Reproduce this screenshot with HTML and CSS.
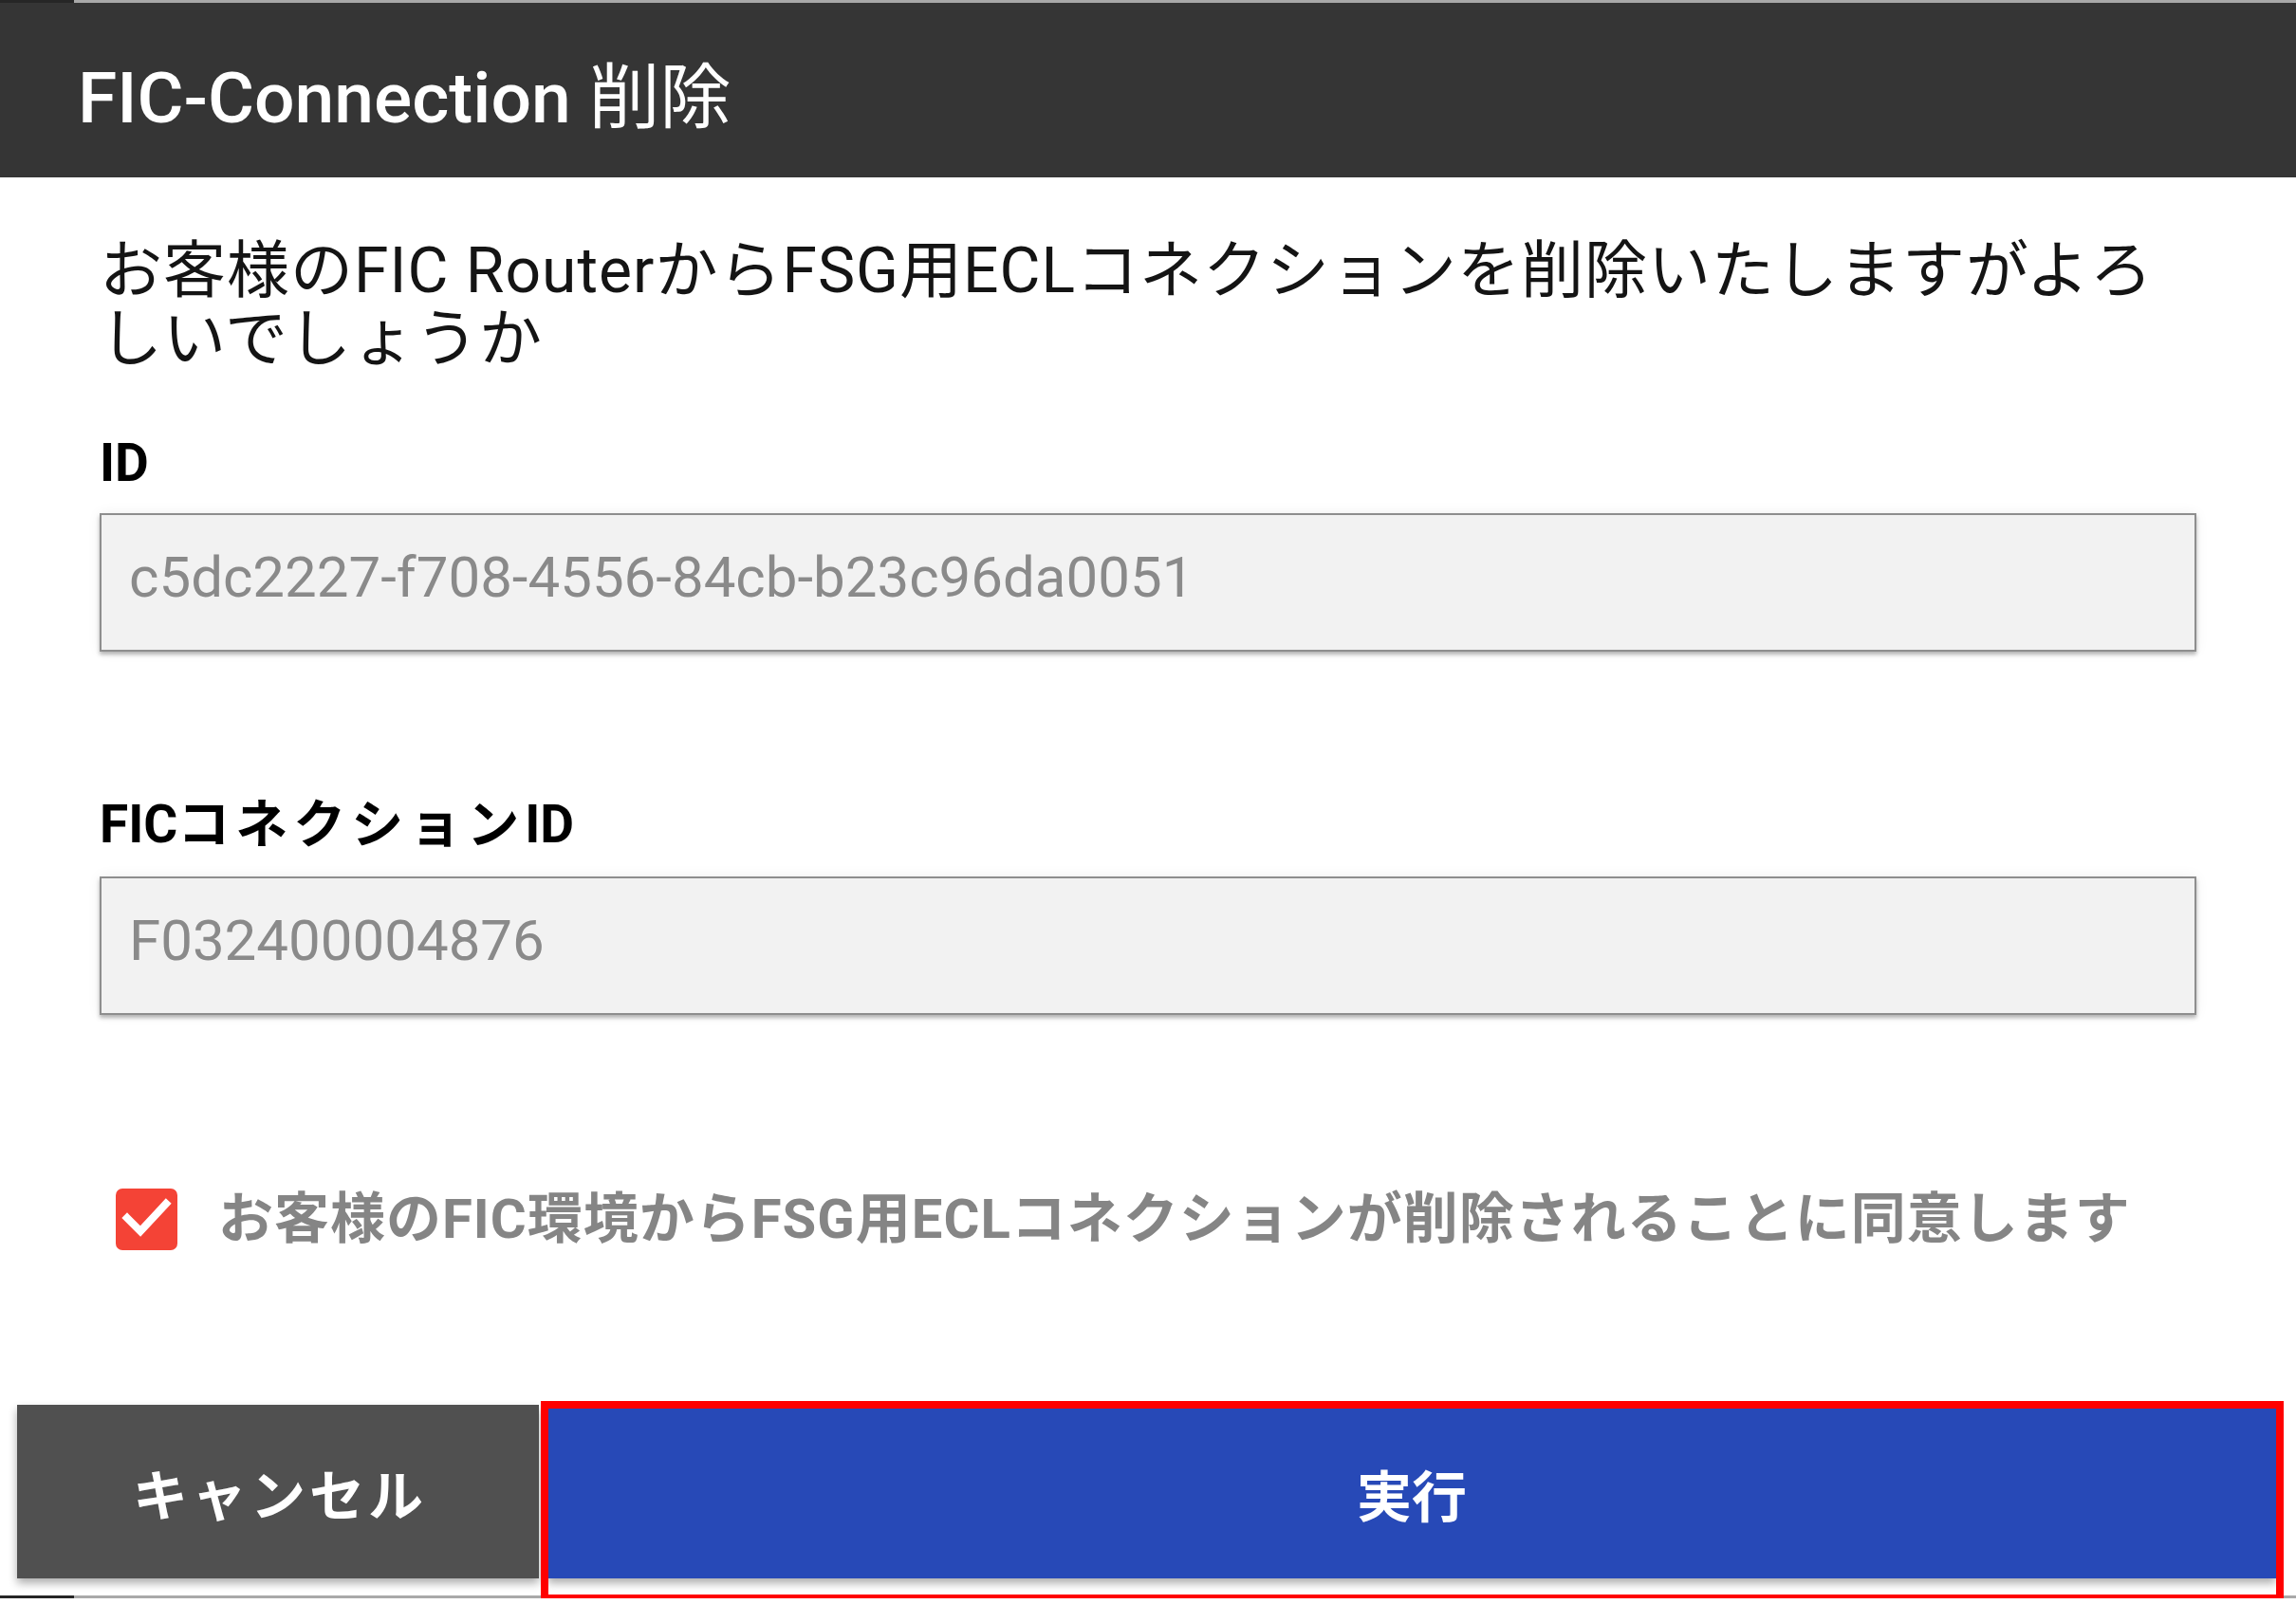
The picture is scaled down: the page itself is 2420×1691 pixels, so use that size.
FILE: index.html
```html
<!DOCTYPE html>
<html lang="ja">
<head>
<meta charset="utf-8">
<title>FIC-Connection 削除</title>
<link rel="stylesheet" href="styles.css">
</head>
<body>
<div class="window">
  <div class="edge edge-top"></div>
  <header class="dialog-header">
    <h1 class="dialog-title">FIC-Connection <span class="title-ja">削除</span></h1>
  </header>
  <main class="dialog-body">
    <p class="message">お客様のFIC RouterからFSG用ECLコネクションを削除いたしますがよろしいでしょうか</p>
    <div class="field field-first">
      <div class="field-label">ID</div>
      <div class="field-value">c5dc2227-f708-4556-84cb-b23c96da0051</div>
    </div>
    <div class="field field-second">
      <div class="field-label">FIC<span class="label-ja">コネクション</span>ID</div>
      <div class="field-value">F032400004876</div>
    </div>
    <label class="agree">
      <svg class="agree-box" width="65" height="65" viewBox="0 0 65 65" aria-hidden="true">
        <rect x="0" y="0" width="65" height="65" rx="7" ry="7" fill="#f44336"/>
        <polyline points="12,31 26,45 53,16" fill="none" stroke="#ffffff" stroke-width="8" stroke-linecap="square" stroke-linejoin="miter"/>
      </svg>
      <span class="agree-text">お客様のFIC環境からFSG用ECLコネクションが削除されることに同意します</span>
    </label>
  </main>
  <footer class="dialog-actions">
    <button class="btn btn-cancel" type="button">キャンセル</button>
    <div class="exec-wrap">
      <button class="btn btn-exec" type="button">実行</button>
    </div>
  </footer>
  <div class="edge edge-bottom"></div>
</div>
</body>
</html>
```
FILE: styles.css
```css
html, body {
  margin: 0;
  padding: 0;
  background: #ffffff;
}

body {
  font-family: Roboto, "Noto Sans CJK JP", sans-serif;
  color: #111111;
}

.window {
  width: 2420px;
  display: flex;
  flex-direction: column;
}

.edge {
  height: 3px;
  background: linear-gradient(to right, #262626 0, #262626 78px, #a9a9a9 78px, #a9a9a9 100%);
}

.dialog-header {
  height: 184px;
  box-sizing: border-box;
  background: #353535;
  padding: 63px 0 0 82px;
}

.dialog-title {
  margin: 0;
  font-size: 75px;
  line-height: 75px;
  font-weight: 500;
  color: #ffffff;
}

.title-ja {
  font-weight: 400;
}

.dialog-body {
  padding: 63px 105px 0 105px;
  display: flex;
  flex-direction: column;
}

.message {
  margin: 0;
  font-size: 66px;
  line-height: 72px;
  letter-spacing: 1px;
  color: #141414;
}

.field {
  display: flex;
  flex-direction: column;
}

.field-first {
  margin-top: 61px;
}

.field-second {
  margin-top: 149px;
}

.field-label {
  font-size: 55px;
  line-height: 66px;
  font-weight: 700;
  color: #000000;
}

.label-ja {
  letter-spacing: 6px;
}

.field-value {
  margin-top: 20px;
  height: 146px;
  box-sizing: border-box;
  display: flex;
  align-items: center;
  padding: 0 32px 11px 29px;
  background: #f2f2f2;
  border: 2px solid #8e8e8e;
  box-shadow: 0 3px 4px rgba(0, 0, 0, 0.28), 0 0 14px rgba(0, 0, 0, 0.06);
  font-size: 60px;
  color: #8a8a8a;
}

.field-second .field-value {
  margin-top: 22px;
}

.agree {
  margin-top: 183px;
  padding-left: 17px;
  display: flex;
  align-items: center;
  gap: 43px;
}

.agree-box {
  flex: none;
  display: block;
}

.agree-text {
  font-size: 58px;
  line-height: 65px;
  font-weight: 700;
  letter-spacing: 1px;
  color: #858585;
}

.dialog-actions {
  margin-top: 163px;
  padding-left: 18px;
  display: flex;
  align-items: flex-start;
}

.btn {
  border: none;
  margin: 0;
  padding: 0;
  font-family: Roboto, "Noto Sans CJK JP", sans-serif;
  font-size: 58px;
  font-weight: 700;
  color: #ffffff;
  cursor: pointer;
  box-shadow: 0 5px 9px rgba(0, 0, 0, 0.33);
}

.btn-cancel {
  width: 550px;
  height: 183px;
  background: #505050;
  letter-spacing: 4px;
  text-indent: 4px;
}

.exec-wrap {
  position: relative;
  margin-left: 9px;
  margin-top: 3px;
  width: 1822px;
}

.btn-exec {
  display: block;
  width: 100%;
  height: 180px;
  background: #2749b7;
}

.exec-wrap::after {
  content: "";
  position: absolute;
  top: -7px;
  left: -7px;
  right: -8px;
  bottom: -25px;
  border: 8px solid #ff0000;
  pointer-events: none;
}

.edge-bottom {
  margin-top: 18px;
}
```
